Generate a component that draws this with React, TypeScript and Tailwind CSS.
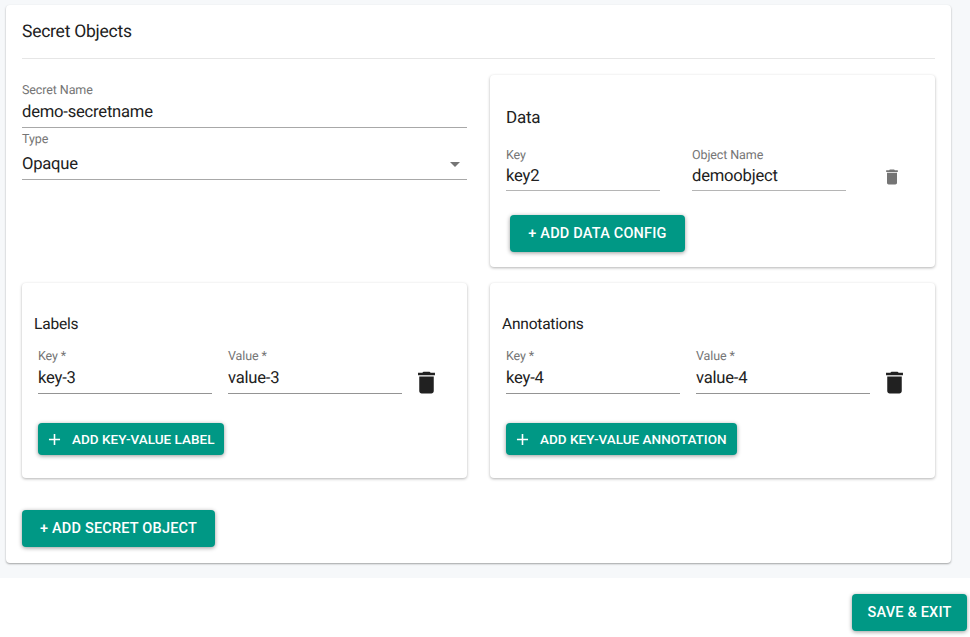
import React from "react";

const DELETE_PATH =
  "M6 19c0 1.1.9 2 2 2h8c1.1 0 2-.9 2-2V7H6v12zM19 4h-3.5l-1-1h-5l-1 1H5v2h14V4z";

const TrashIcon: React.FC<{ className: string }> = ({ className }) => (
  <svg viewBox="0 0 24 24" className={className} fill="currentColor">
    <path d={DELETE_PATH} />
  </svg>
);

const PlusIcon: React.FC = () => (
  <svg viewBox="0 0 24 24" className="h-[19px] w-[19px] shrink-0" fill="currentColor">
    <path d="M19 13h-6v6h-2v-6H5v-2h6V5h2v6h6v2z" />
  </svg>
);

const Field: React.FC<{
  label: string;
  value: string;
  className?: string;
  valueClass?: string;
}> = ({ label, value, className = "", valueClass = "mt-[4px] leading-[22px]" }) => (
  <div className={`border-b border-[#949494] ${className}`}>
    <div className="text-[12.5px] leading-[14px] tracking-[-0.1px] text-[#757575]">{label}</div>
    <div className={`h-[25px] text-[16.6px] tracking-[-0.22px] text-[#212121] ${valueClass}`}>
      {value}
    </div>
  </div>
);

const Panel: React.FC<{
  title: string;
  rowKey: string;
  rowValue: string;
  action: string;
  buttonWidth: string;
}> = ({ title, rowKey, rowValue, action, buttonWidth }) => (
  <div className="h-[195px] rounded bg-white pt-[33px] shadow-[0_1px_3px_rgba(0,0,0,0.3)]">
    <div className="pl-3 text-[15.5px] leading-[16px] tracking-[-0.2px] text-[#212121]">{title}</div>
    <div className="mt-[18px] flex items-end pl-4">
      <Field label="Key *" value={rowKey} className="w-[174px]" />
      <Field label="Value *" value={rowValue} className="ml-4 w-[174px]" />
      <TrashIcon className="-mb-[3px] ml-[10px] h-[29px] w-[29px] text-[#212121]" />
    </div>
    <button
      className={`ml-4 mt-[29px] flex h-[32px] ${buttonWidth} items-center whitespace-nowrap rounded bg-[#009885] pl-[7px] text-[13.5px] font-medium tracking-[0.02px] text-white shadow-[0_1px_4px_rgba(0,0,0,0.4)]`}
    >
      <PlusIcon />
      <span className="ml-[8px]">{action}</span>
    </button>
  </div>
);

const TextButton: React.FC<{ label: string; className: string }> = ({
  label,
  className,
}) => (
  <button
    className={`h-[37px] whitespace-nowrap rounded bg-[#009885] text-[14.5px] font-medium tracking-[0.2px] text-white shadow-[0_1px_4px_rgba(0,0,0,0.4)] ${className}`}
  >
    {label}
  </button>
);

export default function App() {
  return (
    <div className="h-[637px] w-[970px] overflow-hidden bg-white font-['Roboto',sans-serif] antialiased [text-rendering:geometricPrecision]">
      {/* Page background */}
      <div className="h-[578px] bg-[#f6f8fa] pl-[6px] pt-[5px]">
        <div className="h-[558px] w-[945px] rounded bg-white px-4 shadow-[0_1px_2px_rgba(0,0,0,0.35)]">
          <div className="flex h-[54px] items-center border-b border-[#e6e6e6] pt-[1px] text-[17.5px] tracking-[-0.25px] text-[#212121]">
            Secret Objects
          </div>

          <div className="mt-[16px] grid grid-cols-[445px_445px] gap-x-[23px] gap-y-[16px]">
            {/* Secret name and type */}
            <div className="pt-[9px]">
              <div className="h-[44px] border-b-[1.5px] border-[#a8a8a8]">
                <div className="text-[12.5px] leading-[14px] tracking-[-0.1px] text-[#757575]">
                  Secret Name
                </div>
                <div className="mt-[2px] text-[16.6px] leading-[26px] tracking-[-0.22px] text-[#212121]">
                  demo-secretname
                </div>
              </div>
              <div className="mt-[5px] text-[12.5px] leading-[14px] tracking-[-0.1px] text-[#757575]">
                Type
              </div>
              <div className="flex h-[33px] items-center justify-between border-b-[1.5px] border-[#a8a8a8] pr-[7px] pt-[3px] text-[16.6px] tracking-[-0.22px] text-[#212121]">
                <span className="pt-[2px]">Opaque</span>
                <div className="h-0 w-0 border-x-[5px] border-t-[5px] border-x-transparent border-t-[#757575]" />
              </div>
            </div>

            {/* Data */}
            <div className="h-[192px] rounded bg-white pl-4 pt-[33px] shadow-[0_1px_3px_rgba(0,0,0,0.3)]">
              <div className="text-[17px] leading-[20px] tracking-[-0.2px] text-[#212121]">Data</div>
              <div className="mt-[21px] flex items-end">
                <Field
                  label="Key"
                  value="key2"
                  valueClass="mt-[2px] leading-[24px]"
                  className="w-[154px] !border-[#b5b5b5]"
                />
                <Field
                  label="Object Name"
                  value="demoobject"
                  valueClass="mt-[2px] leading-[24px]"
                  className="ml-[32px] w-[154px] !border-[#b5b5b5]"
                />
                <TrashIcon className="mb-[4px] ml-[36px] h-[20px] w-[20px] text-[#757575]" />
              </div>
              <TextButton label="+ ADD DATA CONFIG" className="ml-1 mt-[24px] w-[175px]" />
            </div>

            <Panel
              title="Labels"
              rowKey="key-3"
              rowValue="value-3"
              action="ADD KEY-VALUE LABEL"
              buttonWidth="w-[186px]"
            />
            <Panel
              title="Annotations"
              rowKey="key-4"
              rowValue="value-4"
              action="ADD KEY-VALUE ANNOTATION"
              buttonWidth="w-[231px]"
            />
          </div>

          <TextButton label="+ ADD SECRET OBJECT" className="mt-[32px] w-[193px]" />
        </div>
      </div>

      {/* Footer */}
      <div className="flex justify-end pr-[3px] pt-[16px]">
        <TextButton label="SAVE & EXIT" className="w-[115px]" />
      </div>
    </div>
  );
}
